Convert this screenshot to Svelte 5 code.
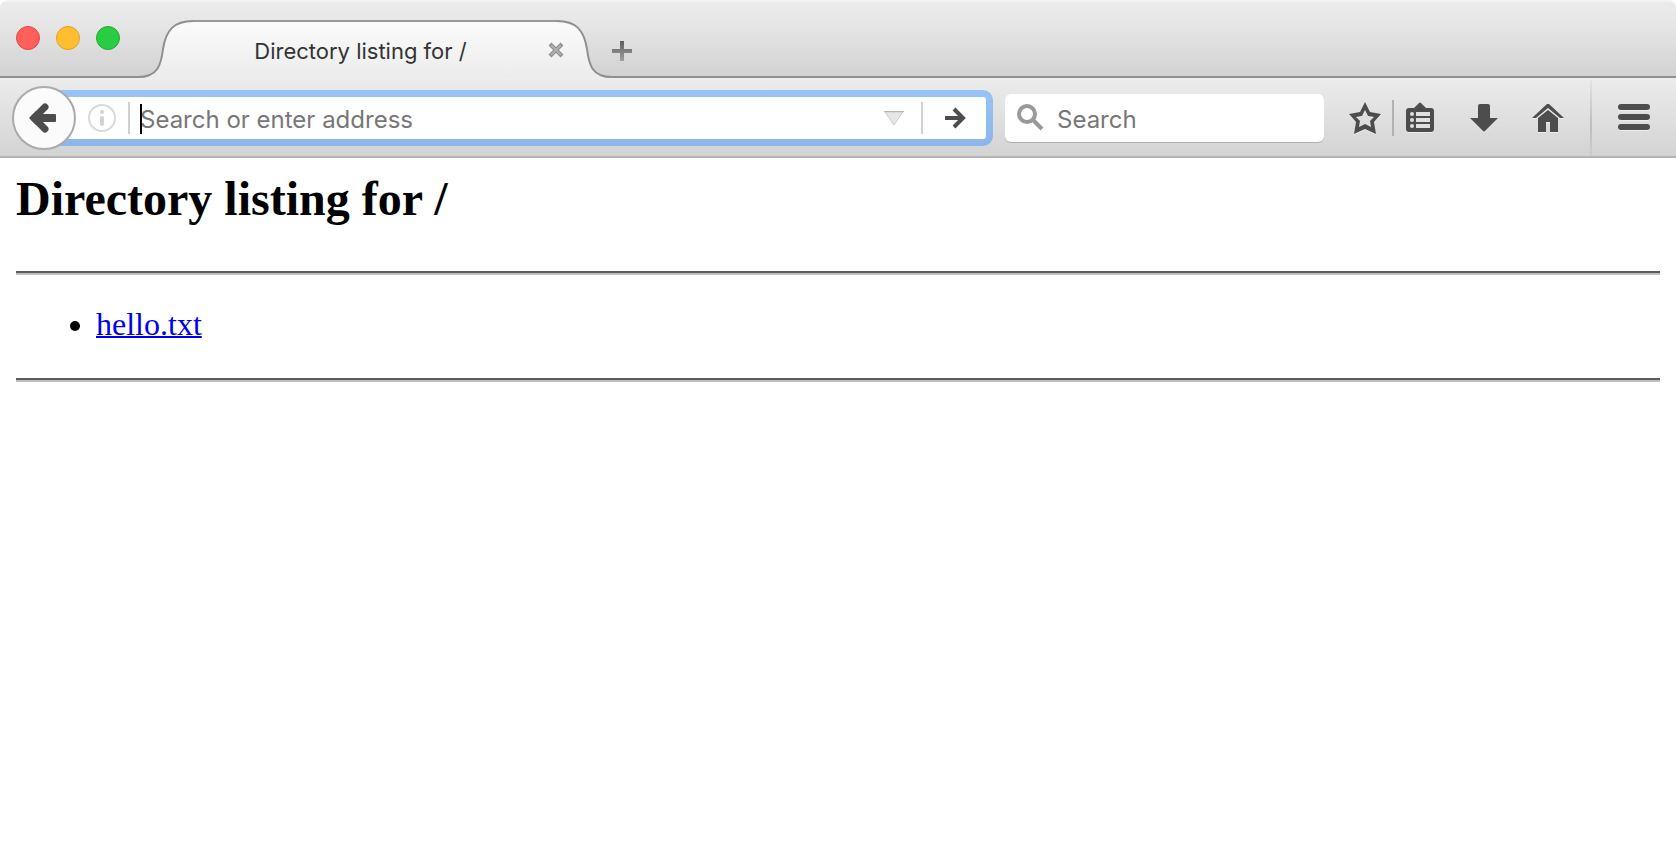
<script>
    let address = '';
    let query = '';

    const title = 'Directory listing for /';
    const files = ['hello.txt'];
    const lights = ['red', 'yellow', 'green'];
</script>

<div class="window">
    <header class="titlebar">
        <div class="lights">
            {#each lights as light}
                <button class="light {light}" aria-label={light}></button>
            {/each}
        </div>
        <div class="tab">
            <svg class="edge" width="55" height="58" viewBox="0 0 55 58">
                <path d="M0 58C20 58 23 45 25 29C28 10 36 1 55 1V58Z" fill="url(#tabfill)" />
                <path d="M0 57C20 57 23 45 25 29C28 10 36 1 55 1" fill="none" stroke="#8f8f8f" stroke-width="2" />
                <defs>
                    <linearGradient id="tabfill" x1="0" y1="0" x2="0" y2="1">
                        <stop offset="0" stop-color="#fbfbfb" />
                        <stop offset="1" stop-color="#ececec" />
                    </linearGradient>
                </defs>
            </svg>
            <div class="tab-body">
                <span class="tab-title">{title}</span>
                <button class="close" aria-label="Close tab">
                    <svg width="16" height="16" viewBox="0 0 16 16">
                        <path d="M2 2L14 14M14 2L2 14" stroke="#8c8c8c" stroke-width="4" />
                        <path d="M3 3L13 13M13 3L3 13" stroke="#b0b0b0" stroke-width="2" />
                    </svg>
                </button>
            </div>
            <svg class="edge right" width="55" height="58" viewBox="0 0 55 58">
                <path d="M0 58C20 58 23 45 25 29C28 10 36 1 55 1V58Z" fill="url(#tabfill)" />
                <path d="M0 57C20 57 23 45 25 29C28 10 36 1 55 1" fill="none" stroke="#8f8f8f" stroke-width="2" />
            </svg>
        </div>
        <button class="new-tab" aria-label="New tab">
            <svg width="20" height="20" viewBox="0 0 20 20">
                <defs>
                    <linearGradient id="plus" x1="0" y1="0" x2="0" y2="1">
                        <stop offset="0" stop-color="#5e5e5e" />
                        <stop offset="1" stop-color="#a0a0a0" />
                    </linearGradient>
                </defs>
                <path d="M8 0H12V8H20V12H12V20H8V12H0V8H8Z" fill="url(#plus)" />
            </svg>
        </button>
    </header>

    <nav class="toolbar">
        <button class="back" aria-label="Back">
            <svg width="28" height="32" viewBox="0 0 28 32">
                <path d="M5 16L16 5M5 16L16 27" stroke="#4d4d4d" stroke-width="7" stroke-linecap="round" />
                <path d="M0 16L7 9V23Z" fill="#4d4d4d" />
                <rect x="4" y="12" width="23" height="8" rx="1" fill="#4d4d4d" />
            </svg>
        </button>
        <div class="urlbar">
            <svg class="info" width="28" height="28" viewBox="0 0 28 28">
                <circle cx="14" cy="14" r="13" fill="none" stroke="#dadada" stroke-width="2" />
                <circle cx="14" cy="8" r="2" fill="#d3d3d3" />
                <rect x="12" y="12" width="4" height="10" rx="2" fill="#d3d3d3" />
            </svg>
            <span class="rule"></span>
            <div class="entry">
                <input type="text" aria-label="Address" placeholder="Search or enter address" bind:value={address} />
                <span class="caret"></span>
            </div>
            <button class="history" aria-label="Show history">
                <svg width="20" height="15" viewBox="0 0 20 15">
                    <path d="M1 1H19L10 14Z" fill="#e6e6e6" stroke="#cbcbcb" />
                    <path d="M0 0H20V1H0Z" fill="#b5b5b5" />
                </svg>
            </button>
            <span class="rule"></span>
            <button class="go" aria-label="Go">
                <svg width="22" height="22" viewBox="0 0 22 22">
                    <path d="M0 11H18M9 2L18 11L9 20" fill="none" stroke="#4d4d4d" stroke-width="4" />
                </svg>
            </button>
        </div>
        <div class="search">
            <svg width="28" height="28" viewBox="0 0 28 28">
                <circle cx="10" cy="10" r="8" fill="none" stroke="#999" stroke-width="4" />
                <path d="M15 15L25 25" stroke="#999" stroke-width="4" />
            </svg>
            <input type="text" aria-label="Search" placeholder="Search" bind:value={query} />
        </div>
        <div class="actions">
            <button aria-label="Bookmark this page">
                <svg width="32" height="32" viewBox="0 0 32 32">
                    <path d="M16 0L21 10L32 12L25 20L27 32L16 27L5 32L7 20L0 12L11 10ZM16 8L13 14L7 15L11 19L10 25L16 22L22 25L21 19L25 15L19 14Z" fill="#4d4d4d" fill-rule="evenodd" />
                </svg>
            </button>
            <span class="divider"></span>
            <button aria-label="Bookmarks">
                <svg width="28" height="32" viewBox="0 0 28 32">
                    <path d="M8 6L13 1Q14 0 15 1L20 6H25Q28 6 28 9V27Q28 30 25 30H3Q0 30 0 27V9Q0 6 3 6Z" fill="#4d4d4d" />
                    <path d="M10 10H24V14H10ZM10 16H24V20H10ZM10 22H24V26H10Z" fill="#e0e0e0" />
                    <circle cx="6" cy="12" r="2" fill="#e0e0e0" />
                    <circle cx="6" cy="18" r="2" fill="#e0e0e0" />
                    <circle cx="6" cy="24" r="2" fill="#e0e0e0" />
                </svg>
            </button>
            <div class="group">
                <button class="wide" aria-label="Downloads">
                    <svg width="28" height="28" viewBox="0 0 28 28">
                        <path d="M10 0H18Q20 0 20 2V14H28L15 27Q14 28 13 27L0 14H8V2Q8 0 10 0Z" fill="#4d4d4d" />
                    </svg>
                </button>
                <button class="wide" aria-label="Home">
                    <svg width="32" height="28" viewBox="0 0 32 28">
                        <path d="M0 14L15 0H17L32 14H28L16 4L4 14Z" fill="#4d4d4d" />
                        <path d="M6 14L16 6L26 14V28H18V18H14V28H6Z" fill="#4d4d4d" />
                    </svg>
                </button>
            </div>
        </div>
        <button class="menu" aria-label="Open menu">
            <svg width="32" height="26" viewBox="0 0 32 26">
                <rect width="32" height="6" rx="3" fill="#4d4d4d" />
                <rect y="10" width="32" height="6" rx="3" fill="#4d4d4d" />
                <rect y="20" width="32" height="6" rx="3" fill="#4d4d4d" />
            </svg>
        </button>
    </nav>

    <main>
        <h2>{title}</h2>
        <hr />
        <ul>
            {#each files as file}
                <li><a href="#{file}">{file}</a></li>
            {/each}
        </ul>
        <hr />
    </main>
</div>

<style>
    :global(body) {
        margin: 0;
        background: #fff;
    }

    .window {
        font-family: Inter, "Liberation Sans", sans-serif;
    }

    button {
        display: flex;
        align-items: center;
        justify-content: center;
        padding: 0;
        border: none;
        background: none;
    }

    svg {
        display: block;
        flex-shrink: 0;
    }

    .titlebar {
        display: flex;
        align-items: flex-end;
        height: 78px;
        box-sizing: border-box;
        border-radius: 8px 8px 0 0;
        background:
            linear-gradient(#8f8f8f, #8f8f8f) bottom / 100% 2px no-repeat,
            linear-gradient(#f6f6f6 0, #ebebeb 3px, #e6e6e6 24px, #d1d1d1 100%);
    }

    .lights {
        display: flex;
        gap: 16px;
        width: 122px;
        padding: 0 0 28px 16px;
    }

    .light {
        width: 24px;
        height: 24px;
        border-radius: 50%;
    }

    .red {
        background: #ff6059;
        border: 1px solid #e2463f;
    }

    .yellow {
        background: #ffbe2f;
        border: 1px solid #e0a11f;
    }

    .green {
        background: #29cc42;
        border: 1px solid #1dad2b;
    }

    .tab {
        display: flex;
        width: 474px;
        height: 58px;
    }

    .right {
        transform: scaleX(-1);
    }

    .tab-body {
        display: flex;
        flex: 1;
        align-items: center;
        border-top: 2px solid #999;
        background: linear-gradient(#fbfbfb, #ececec);
    }

    .tab-title {
        flex: 1;
        padding: 2px 20px 0 0;
        text-align: center;
        font-size: 22px;
        line-height: 28px;
        white-space: nowrap;
        color: #333;
    }

    .close {
        position: relative;
        z-index: 1;
        margin-right: -7px;
    }

    .new-tab {
        height: 54px;
    }

    .toolbar {
        display: flex;
        align-items: center;
        height: 80px;
        padding: 2px 0 0 12px;
        box-sizing: border-box;
        border-bottom: 2px solid #b4b4b4;
        background: linear-gradient(#efefef 0, #ebebeb 3px, #d3d3d3 100%);
    }

    .back {
        position: relative;
        width: 64px;
        height: 64px;
        padding-right: 2px;
        border: 2px solid #aaa;
        border-radius: 50%;
        background: #fbfbfb;
    }

    .urlbar {
        display: flex;
        flex: 1;
        align-items: center;
        height: 56px;
        box-sizing: border-box;
        margin-left: -32px;
        padding-left: 44px;
        border: 7px solid transparent;
        border-left: none;
        border-radius: 0 10px 10px 0;
        background:
            linear-gradient(#fff, #fff) padding-box,
            linear-gradient(#97c3f5, #8cb6e9) border-box;
    }

    .rule {
        width: 2px;
        height: 32px;
        background: #d1d1d1;
    }

    .info {
        margin-right: 12px;
    }

    .entry {
        position: relative;
        display: flex;
        flex: 1;
        margin-left: 10px;
    }

    .caret {
        position: absolute;
        bottom: 0;
        left: 0;
        width: 2px;
        height: 30px;
        background: #000;
    }

    input {
        flex: 1;
        min-width: 0;
        height: 32px;
        padding: 2px 0 0;
        box-sizing: border-box;
        border: none;
        outline: none;
        background: none;
        font-family: inherit;
        font-size: 24px;
        color: #333;
    }

    input::placeholder {
        color: #777;
        opacity: 1;
    }

    .history {
        margin-right: 17px;
    }

    .go {
        width: 63px;
        padding-left: 2px;
    }

    .search {
        display: flex;
        align-items: center;
        gap: 12px;
        width: 319px;
        height: 48px;
        box-sizing: border-box;
        margin-left: 12px;
        padding: 0 12px;
        border-radius: 6px;
        background: #fff;
        box-shadow: 0 1px 0 #b0b0b0;
    }

    .actions {
        display: flex;
        align-items: center;
        padding: 0 10px 0 25px;
    }

    .actions svg,
    .menu svg {
        filter: drop-shadow(0 1px 0 #eee);
    }

    .divider {
        width: 2px;
        height: 36px;
        margin: 0 12px 0 11px;
        background: #b2b2b2;
    }

    .group {
        display: flex;
        margin-left: 18px;
    }

    .wide {
        width: 64px;
    }

    .menu {
        align-self: stretch;
        width: 86px;
        padding-bottom: 2px;
        border-left: 2px solid;
        border-image: linear-gradient(#e4e4e4, #bdbdbd 60%, #cfcfcf) 1;
    }

    main {
        padding: 13px 16px;
        font-family: "Liberation Serif", serif;
        color: #000;
    }

    h2 {
        margin: 0 0 44px;
        font-size: 48px;
        line-height: 56px;
    }

    hr {
        margin: 0;
        border: none;
        border-top: 2px solid #5c5c5c;
        border-bottom: 2px solid #bfbfbf;
    }

    ul {
        margin: 31px 0 36px;
        padding-left: 80px;
        font-size: 32px;
        line-height: 36px;
    }

    a {
        color: #0000ee;
        text-decoration-thickness: 2px;
    }
</style>
